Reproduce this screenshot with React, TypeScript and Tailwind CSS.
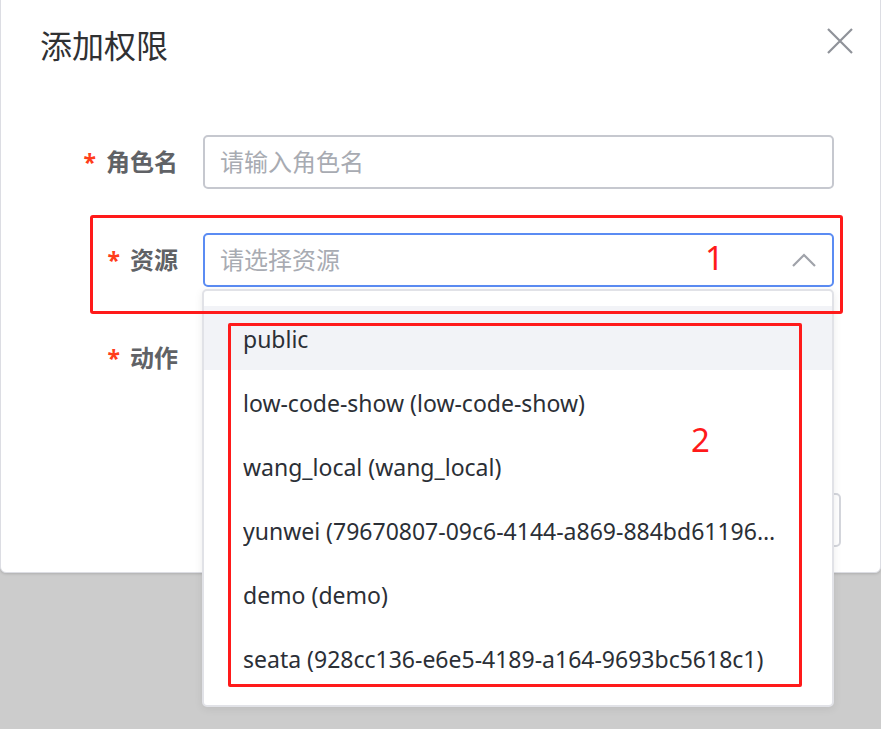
import React from "react";

const items = [
  "public",
  "low-code-show (low-code-show)",
  "wang_local (wang_local)",
  "yunwei (79670807-09c6-4144-a869-884bd611963f)",
  "demo (demo)",
  "seata (928cc136-e6e5-4189-a164-9693bc5618c1)",
];

function Label({ text }: { text: string }) {
  return (
    <div className="w-[202px] shrink-0 pr-[25px] flex items-center justify-end h-[54px]">
      <span className="text-[#ff3d1a] text-[23px] font-bold mr-[10px] leading-none">*</span>
      <span className="text-[#606266] text-[24px] font-bold leading-none">{text}</span>
    </div>
  );
}

export default function App() {
  return (
    <div
      className="relative w-[881px] h-[729px] bg-[#cccccc] overflow-hidden"
      style={{ fontFamily: '"Noto Sans", "Noto Sans CJK SC", sans-serif' }}
    >
      <div className="w-[881px] h-[579px] -mt-[6px] bg-white border border-[#dcdde3] rounded-[6px] shadow-[0_1px_3px_rgba(0,0,0,0.15)]">
        <div className="h-[106px] flex items-start justify-between pl-[39px] pr-[27px]">
          <span className="mt-[35px] text-[32px] text-[#303133] leading-none">添加权限</span>
          <svg className="mt-[33px]" width="26" height="26" viewBox="0 0 26 26">
            <path d="M1 1 L25 25 M25 1 L1 25" stroke="#8f9299" strokeWidth="2.2" fill="none" />
          </svg>
        </div>
        <div className="pt-[34px]">
          <div className="flex h-[54px] mb-[44px]">
            <Label text="角色名" />
            <div className="w-[631px] h-[54px] border-2 border-[#c6c8cf] rounded-[5px] flex items-center pl-[15px]">
              <span className="text-[24px] text-[#a8abb2] leading-none">请输入角色名</span>
            </div>
          </div>
          <div className="flex h-[54px] mb-[44px]">
            <Label text="资源" />
            <div className="w-[631px] h-[54px] border-2 border-[#5b8cf3] rounded-[5px] flex items-center justify-between pl-[15px] pr-[16px]">
              <span className="text-[24px] text-[#a8abb2] leading-none">请选择资源</span>
              <svg width="24" height="14" viewBox="0 0 24 14">
                <path d="M1 13 L12 2 L23 13" stroke="#a0a3aa" strokeWidth="2.2" fill="none" />
              </svg>
            </div>
          </div>
          <div className="flex h-[54px]">
            <Label text="动作" />
          </div>
          <div className="flex justify-end pr-[39px] mt-[108px] gap-[20px]">
            <div className="w-[120px] h-[54px] rounded-[5px] bg-[#409eff] text-white text-[22px] flex items-center justify-center">确定</div>
            <div className="w-[120px] h-[54px] rounded-[5px] border-2 border-[#d4d6dc] bg-white text-[#606266] text-[22px] flex items-center justify-center">取消</div>
          </div>
        </div>
      </div>

      {/* dropdown menu */}
      <div className="absolute left-[202px] top-[289px] w-[632px] h-[418px] bg-white border-2 border-[#e1e2e7] rounded-[5px] shadow-[0_2px_8px_rgba(0,0,0,0.08)] pt-[15px]">
        {items.map((t, i) => (
          <div
            key={t}
            className={
              "h-[64px] pl-[39px] pr-[49px] flex items-center text-[23px] text-[#2b2f36] " +
              (i === 0 ? "bg-[#f2f3f7]" : "")
            }
          >
            <span className="block w-full truncate leading-[1.35] pt-[4px]">{t}</span>
          </div>
        ))}
      </div>

      {/* annotation boxes */}
      <div className="absolute left-[90px] top-[215px] w-[753px] h-[99px] border-[3px] border-[#ff1a1a] rounded-[3px]" />
      <div className="absolute left-[228px] top-[323px] w-[574px] h-[364px] border-[3px] border-[#ff1a1a] rounded-[2px]" />
      <span className="absolute left-[705px] top-[241px] text-[#ff1a1a] text-[33px] leading-none">1</span>
      <span className="absolute left-[691px] top-[423px] text-[#ff1a1a] text-[33px] leading-none">2</span>
    </div>
  );
}
